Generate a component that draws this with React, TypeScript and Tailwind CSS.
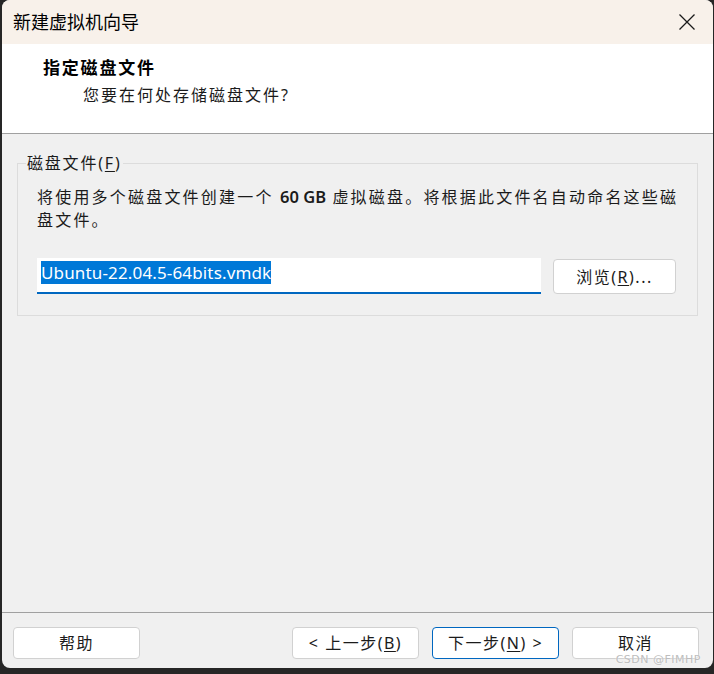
import React from 'react';

const FONT = { fontFamily: '"Noto Sans", "Noto Sans CJK SC", sans-serif' };

function WinButton({ children, primary = false }: { children: React.ReactNode; primary?: boolean }) {
  return (
    <button
      className={`h-[32px] w-[127px] rounded-[4px] bg-white text-[16px] tracking-[1.5px] text-[#1b1b1b] leading-none flex items-center justify-center border ${
        primary ? 'border-[#0067c0]' : 'border-[#d1d1d1]'
      }`}
    >
      {children}
    </button>
  );
}

export default function App() {
  return (
    <div className="w-[714px] h-[674px] bg-[#262626] pl-[2px] pr-[1px] overflow-hidden" style={FONT}>
      <div className="relative h-[668px] rounded-[8px] bg-[#f0f0f0] overflow-hidden flex flex-col">
        {/* Title bar */}
        <div className="h-[44px] shrink-0 bg-[#f8f1ea] flex items-center justify-between pl-[11px] pr-[16px]">
          <span className="text-[18px] text-black leading-none">新建虚拟机向导</span>
          <svg width="18" height="18" viewBox="0 0 18 18" className="mr-[1px]">
            <path d="M1.5 1.5 L16.5 16.5 M16.5 1.5 L1.5 16.5" stroke="#1a1a1a" strokeWidth="1.3" fill="none" />
          </svg>
        </div>

        {/* Header */}
        <div className="h-[90px] shrink-0 bg-white border-b border-[#a0a0a0] pt-[12px] pl-[41px]">
          <div className="text-[17px] font-bold tracking-[1.8px] leading-[24px] text-black">指定磁盘文件</div>
          <div className="text-[16px] tracking-[2px] leading-[24px] text-[#1b1b1b] pl-[40px] mt-[3px]">
            您要在何处存储磁盘文件?
          </div>
        </div>

        {/* Body */}
        <div className="flex-1 pt-[18px] pl-[15px] pr-[15px]">
          <fieldset className="border border-[#dcdcdc] pl-[19px] pr-[10px] pb-[21px]">
            <legend className="-ml-[11px] px-[1px] text-[16px] tracking-[1.8px] leading-[22px] text-[#1b1b1b]">
              磁盘文件(<span className="underline underline-offset-2">F</span>)
            </legend>
            <p className="pt-[11px] text-[16px] tracking-[2.2px] leading-[23px] text-[#1b1b1b]">
              将使用多个磁盘文件创建一个{' '}
              <span className="tracking-normal font-semibold text-[16.5px]">60 GB</span> 虚拟磁盘。将根据此文件名自动命名这些磁盘文件。
            </p>
            <div className="mt-[26px] flex items-start gap-[12px]">
              <div className="h-[36px] w-[504px] bg-white border-b-2 border-[#0067c0] pl-[4px] pt-[3px]">
                <span className="inline-block bg-[#0078d7] text-white text-[17px] leading-[23px] tracking-[0.15px]">
                  Ubuntu-22.04.5-64bits.vmdk
                </span>
              </div>
              <div className="mt-px">
                <button className="h-[35px] w-[123px] rounded-[4px] bg-white border border-[#d1d1d1] text-[16px] tracking-[1.5px] text-[#1b1b1b] flex items-center justify-center">
                  浏览(<span className="underline underline-offset-2">R</span>)...
                </button>
              </div>
            </div>
          </fieldset>
        </div>

        {/* Footer */}
        <div className="h-[56px] shrink-0 border-t border-[#a0a0a0] pt-[14px] pl-[11px] pr-[14px] flex items-start">
          <WinButton>帮助</WinButton>
          <div className="flex-1" />
          <div className="flex gap-[13px]">
            <WinButton>
              &lt; 上一步(<span className="underline underline-offset-2">B</span>)
            </WinButton>
            <WinButton primary>
              下一步(<span className="underline underline-offset-2">N</span>) &gt;
            </WinButton>
            <WinButton>取消</WinButton>
          </div>
        </div>

        {/* watermark */}
        <span
          className="absolute right-[12px] bottom-[3px] text-[11px] text-[#bdbdbd] leading-none tracking-[0.5px]"
          style={{ fontFamily: '"DejaVu Sans", sans-serif', textShadow: '0 0 2px #fff' }}
        >
          CSDN @FIMHP
        </span>
      </div>
    </div>
  );
}
